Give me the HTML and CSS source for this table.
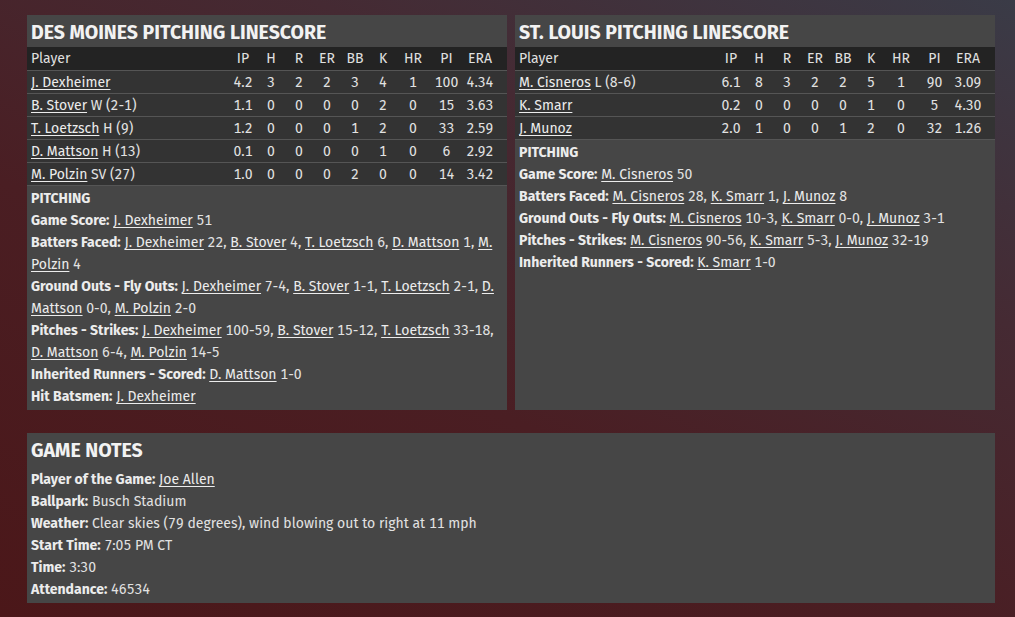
FILE: index.html
```html
<!DOCTYPE html>
<html lang="en">
<head>
    <meta charset="UTF-8">
    <title>Box Score</title>
    <link rel="stylesheet" href="styles.css">
</head>
<body>
    <div class="page">
        <div class="top-row">
            <div class="panel">
                <h2 class="panel-title">DES MOINES PITCHING LINESCORE</h2>
                <table class="linescore">
                    <thead>
                        <tr>
                            <th class="player">Player</th>
                            <th>IP</th><th>H</th><th>R</th><th>ER</th><th>BB</th><th>K</th><th>HR</th><th>PI</th><th class="era">ERA</th>
                        </tr>
                    </thead>
                    <tbody>
                        <tr>
                            <td class="player"><a href="#">J. Dexheimer</a></td>
                            <td>4.2</td><td>3</td><td>2</td><td>2</td><td>3</td><td>4</td><td>1</td><td>100</td><td class="era">4.34</td>
                        </tr>
                        <tr>
                            <td class="player"><a href="#">B. Stover</a> W (2-1)</td>
                            <td>1.1</td><td>0</td><td>0</td><td>0</td><td>0</td><td>2</td><td>0</td><td>15</td><td class="era">3.63</td>
                        </tr>
                        <tr>
                            <td class="player"><a href="#">T. Loetzsch</a> H (9)</td>
                            <td>1.2</td><td>0</td><td>0</td><td>0</td><td>1</td><td>2</td><td>0</td><td>33</td><td class="era">2.59</td>
                        </tr>
                        <tr>
                            <td class="player"><a href="#">D. Mattson</a> H (13)</td>
                            <td>0.1</td><td>0</td><td>0</td><td>0</td><td>0</td><td>1</td><td>0</td><td>6</td><td class="era">2.92</td>
                        </tr>
                        <tr>
                            <td class="player"><a href="#">M. Polzin</a> SV (27)</td>
                            <td>1.0</td><td>0</td><td>0</td><td>0</td><td>2</td><td>0</td><td>0</td><td>14</td><td class="era">3.42</td>
                        </tr>
                    </tbody>
                </table>
                <div class="notes">
                    <div class="notes-head">PITCHING</div>
                    <p><b>Game Score:</b> <a href="#">J. Dexheimer</a> 51</p>
                    <p><b>Batters Faced:</b> <a href="#">J. Dexheimer</a> 22, <a href="#">B. Stover</a> 4, <a href="#">T. Loetzsch</a> 6, <a href="#">D. Mattson</a> 1, <a href="#">M. Polzin</a> 4</p>
                    <p><b>Ground Outs - Fly Outs:</b> <a href="#">J. Dexheimer</a> 7-4, <a href="#">B. Stover</a> 1-1, <a href="#">T. Loetzsch</a> 2-1, <a href="#">D. Mattson</a> 0-0, <a href="#">M. Polzin</a> 2-0</p>
                    <p><b>Pitches - Strikes:</b> <a href="#">J. Dexheimer</a> 100-59, <a href="#">B. Stover</a> 15-12, <a href="#">T. Loetzsch</a> 33-18, <a href="#">D. Mattson</a> 6-4, <a href="#">M. Polzin</a> 14-5</p>
                    <p><b>Inherited Runners - Scored:</b> <a href="#">D. Mattson</a> 1-0</p>
                    <p><b>Hit Batsmen:</b> <a href="#">J. Dexheimer</a></p>
                </div>
            </div>

            <div class="panel">
                <h2 class="panel-title">ST. LOUIS PITCHING LINESCORE</h2>
                <table class="linescore">
                    <thead>
                        <tr>
                            <th class="player">Player</th>
                            <th>IP</th><th>H</th><th>R</th><th>ER</th><th>BB</th><th>K</th><th>HR</th><th>PI</th><th class="era">ERA</th>
                        </tr>
                    </thead>
                    <tbody>
                        <tr>
                            <td class="player"><a href="#">M. Cisneros</a> L (8-6)</td>
                            <td>6.1</td><td>8</td><td>3</td><td>2</td><td>2</td><td>5</td><td>1</td><td>90</td><td class="era">3.09</td>
                        </tr>
                        <tr>
                            <td class="player"><a href="#">K. Smarr</a></td>
                            <td>0.2</td><td>0</td><td>0</td><td>0</td><td>0</td><td>1</td><td>0</td><td>5</td><td class="era">4.30</td>
                        </tr>
                        <tr>
                            <td class="player"><a href="#">J. Munoz</a></td>
                            <td>2.0</td><td>1</td><td>0</td><td>0</td><td>1</td><td>2</td><td>0</td><td>32</td><td class="era">1.26</td>
                        </tr>
                    </tbody>
                </table>
                <div class="notes">
                    <div class="notes-head">PITCHING</div>
                    <p><b>Game Score:</b> <a href="#">M. Cisneros</a> 50</p>
                    <p><b>Batters Faced:</b> <a href="#">M. Cisneros</a> 28, <a href="#">K. Smarr</a> 1, <a href="#">J. Munoz</a> 8</p>
                    <p><b>Ground Outs - Fly Outs:</b> <a href="#">M. Cisneros</a> 10-3, <a href="#">K. Smarr</a> 0-0, <a href="#">J. Munoz</a> 3-1</p>
                    <p><b>Pitches - Strikes:</b> <a href="#">M. Cisneros</a> 90-56, <a href="#">K. Smarr</a> 5-3, <a href="#">J. Munoz</a> 32-19</p>
                    <p><b>Inherited Runners - Scored:</b> <a href="#">K. Smarr</a> 1-0</p>
                </div>
            </div>
        </div>

        <div class="panel game-notes">
            <h2 class="panel-title">GAME NOTES</h2>
            <div class="notes">
                <p><b>Player of the Game:</b> <a href="#">Joe Allen</a></p>
                <p><b>Ballpark:</b> Busch Stadium</p>
                <p><b>Weather:</b> Clear skies (79 degrees), wind blowing out to right at 11 mph</p>
                <p><b>Start Time:</b> 7:05 PM CT</p>
                <p><b>Time:</b> 3:30</p>
                <p><b>Attendance:</b> 46534</p>
            </div>
        </div>
    </div>
</body>
</html>
```

FILE: styles.css
```css
html, body {
    height: 100%;
}
body {
    margin: 0;
    font-family: "Fira Sans", "Open Sans", "Noto Sans", sans-serif;
    font-size: 14px;
    font-variant-numeric: tabular-nums;
    color: #e2e2e2;
    background: linear-gradient(205deg, #3a3b47 0%, #452a33 30%, #4a1e23 60%, #4b1719 100%);
    overflow: hidden;
}
.page {
    padding: 15px 20px 0 27px;
}
.top-row {
    display: grid;
    grid-template-columns: 1fr 1fr;
    gap: 8px;
    margin-bottom: 23px;
}
.panel {
    background-color: #464646;
}
.panel-title {
    margin: 0;
    height: 32px;
    line-height: 35px;
    padding: 0 4px;
    font-size: 19.5px;
    font-weight: bold;
    color: #f2f2f2;
}
.linescore {
    width: 100%;
    border-collapse: collapse;
    table-layout: fixed;
}
.linescore th, .linescore td {
    padding: 0;
    text-align: center;
    font-weight: normal;
    width: 28px;
}
.linescore th {
    height: 23px;
    background-color: #232323;
    color: #e0e0e0;
}
.linescore td {
    height: 22px;
    background-color: #333333;
    border-top: 1px solid #555555;
}
.linescore tbody tr:last-child td {
    border-bottom: 1px solid #555555;
}
.linescore .player {
    width: auto;
    text-align: left;
    padding-left: 4px;
}
.linescore th:nth-child(8), .linescore td:nth-child(8) {
    width: 32px;
}
.linescore th:nth-child(9), .linescore td:nth-child(9) {
    width: 35px;
}
.linescore .era {
    width: 32px;
    padding-right: 11px;
}
a {
    color: #ececec;
    text-decoration: underline;
    text-underline-offset: 2px;
}
.notes {
    padding: 2px 4px;
}
.notes-head {
    font-weight: bold;
    line-height: 22px;
    color: #ececec;
}
.notes p {
    margin: 0;
    line-height: 22px;
}
.notes b {
    color: #ececec;
}
.game-notes .panel-title {
    height: 35px;
    line-height: 36px;
}
.game-notes .notes {
    padding-top: 1px;
}
```
